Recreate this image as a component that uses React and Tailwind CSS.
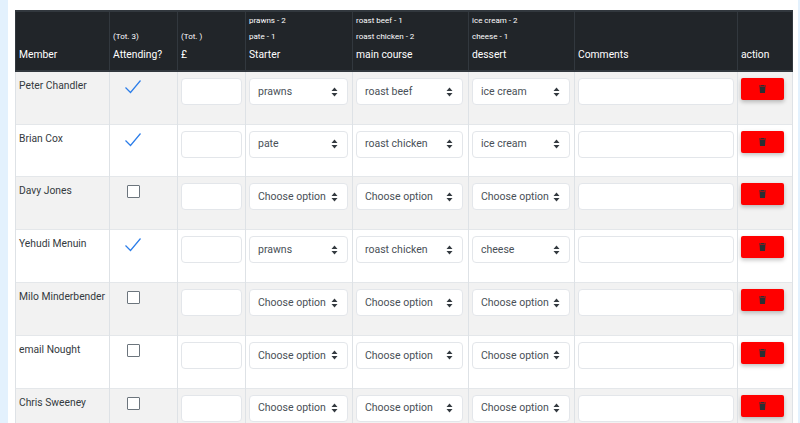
const rows = [
  { name: 'Peter Chandler', going: true, starter: 'prawns', main: 'roast beef', dessert: 'ice cream' },
  { name: 'Brian Cox', going: true, starter: 'pate', main: 'roast chicken', dessert: 'ice cream' },
  { name: 'Davy Jones' },
  { name: 'Yehudi Menuin', going: true, starter: 'prawns', main: 'roast chicken', dessert: 'cheese' },
  { name: 'Milo Minderbender' },
  { name: 'email Nought' },
  { name: 'Chris Sweeney' },
];

function FakeSelect({ value }) {
  return (
    <div className="flex h-[27px] items-center justify-between whitespace-nowrap rounded-[4px] border border-[#e3e6ea] bg-white pl-[8px] pr-[9px] text-[10.5px] text-[#495057]">
      <span>{value || 'Choose option'}</span>
      <svg width="7" height="10" viewBox="0 0 7 10" className="fill-[#343a40]">
        <path d="M3.5 0.5 L6.5 4 H0.5 Z M0.5 6 H6.5 L3.5 9.5 Z" />
      </svg>
    </div>
  );
}

function Head({ lines = [], title }) {
  return (
    <th className="border-x border-[#32383e] px-[3px] pb-[7px] pt-0 align-bottom text-left font-normal text-white">
      {lines.map((l) => (
        <div key={l} className="mb-[6px] whitespace-nowrap text-[8px] leading-[9.5px]">{l}</div>
      ))}
      <div className="text-[10.3px] leading-[16px]">{title}</div>
    </th>
  );
}

export default function App() {
  return (
    <div className="h-[423px] w-[800px] overflow-hidden bg-[#e3f1fd] font-['Roboto',sans-serif]">
      <div className="ml-[8px] h-full w-[790px] bg-white pl-[7px] pt-[10px]">
        <table className="w-[777px] table-fixed border-collapse">
          <colgroup>
            <col className="w-[94px]" />
            <col className="w-[68px]" />
            <col className="w-[68px]" />
            <col className="w-[107px]" />
            <col className="w-[116px]" />
            <col className="w-[106px]" />
            <col className="w-[163px]" />
            <col className="w-[55px]" />
          </colgroup>
          <thead>
            <tr className="h-[60.4px] border-y-2 border-[#32383e] bg-[#212529]">
              <Head title="Member" />
              <Head lines={['(Tot. 3)']} title="Attending?" />
              <Head lines={['(Tot. )']} title="£" />
              <Head lines={['prawns - 2', 'pate - 1']} title="Starter" />
              <Head lines={['roast beef - 1', 'roast chicken - 2']} title="main course" />
              <Head lines={['ice cream - 2', 'cheese - 1']} title="dessert" />
              <Head title="Comments" />
              <Head title="action" />
            </tr>
          </thead>
          <tbody>
            {rows.map((r) => (
              <tr key={r.name} className="h-[52.8px] border-b border-[#e4e7ea] odd:bg-[#f2f2f2]">
                <td className="whitespace-nowrap border-x border-[#dee2e6] px-[3px] pt-[6px] align-top text-[10.3px] leading-[16px] text-[#343a40]">{r.name}</td>
                <td className="border-x border-[#dee2e6] pt-[6px] align-top">
                  <div className="ml-[14px] flex h-[18px] w-[18px] justify-center">
                    {r.going ? (
                      <svg width="18" height="18" viewBox="0 0 18 18" fill="none" className="stroke-[#2b7de9]">
                        <path d="M1.5 9.5 L6.5 14.5 L16.5 2.5" strokeWidth="1.2" />
                      </svg>
                    ) : (
                      <div className="mt-[2px] h-[13px] w-[13px] rounded-[1px] border-[1.5px] border-[#6c757d] bg-white" />
                    )}
                  </div>
                </td>
                <td className="border-x border-[#dee2e6] px-[3px] pt-[6px] align-top">
                  <div className="h-[27px] rounded-[4px] border border-[#e3e6ea] bg-white" />
                </td>
                <td className="border-x border-[#dee2e6] pl-[3px] pr-[4px] pt-[6px] align-top"><FakeSelect value={r.starter} /></td>
                <td className="border-x border-[#dee2e6] pl-[3px] pr-[5px] pt-[6px] align-top"><FakeSelect value={r.main} /></td>
                <td className="border-x border-[#dee2e6] pl-[3px] pr-[4px] pt-[6px] align-top"><FakeSelect value={r.dessert} /></td>
                <td className="border-x border-[#dee2e6] px-[3px] pt-[6px] align-top">
                  <div className="h-[27px] rounded-[4px] border border-[#e3e6ea] bg-white" />
                </td>
                <td className="border-x border-[#dee2e6] px-[3px] pt-[6px] align-top">
                  <button className="flex h-[22px] w-[43px] items-center justify-center rounded-[2px] bg-[#ff0000] shadow-[0_2px_4px_rgba(0,0,0,0.25)]">
                    <svg width="7" height="8" viewBox="0 0 7 8" className="fill-[#2b2f33]">
                      <path d="M2.2 0 H4.8 L5.2 .6 H7 V1.5 H0 V.6 H1.8 Z M.6 2 H6.4 L6 8 H1 Z" />
                    </svg>
                  </button>
                </td>
              </tr>
            ))}
          </tbody>
        </table>
      </div>
    </div>
  );
}
